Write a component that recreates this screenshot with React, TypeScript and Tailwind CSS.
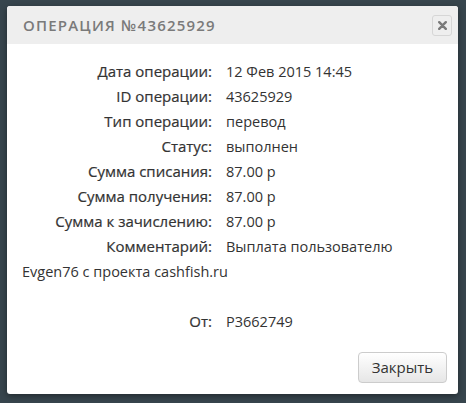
import React from "react";

const rows = [
  { label: "Дата операции:", value: "12 Фев 2015 14:45" },
  { label: "ID операции:", value: "43625929" },
  { label: "Тип операции:", value: "перевод" },
  { label: "Статус:", value: "выполнен" },
  { label: "Сумма списания:", value: "87.00 р" },
  { label: "Сумма получения:", value: "87.00 р" },
  { label: "Сумма к зачислению:", value: "87.00 р" },
];

const labelCls =
  "w-[190px] text-right text-[15px] text-[#333] [-webkit-text-stroke:0.2px_#333]";

export default function App() {
  return (
    <div className="w-[466px] h-[403px] bg-[#37454d] pt-[6px] pl-[7px] font-['Open_Sans',sans-serif]">
      <div className="w-[451px] h-[388px] bg-white rounded-[3px] shadow-[0_2px_6px_rgba(0,0,0,0.4)] flex flex-col overflow-hidden">
        {/* header */}
        <div className="h-[38px] bg-[#eeeeee] flex items-center justify-between pl-[16px] pr-[6px]">
          <span className="text-[15px] font-semibold tracking-[1.2px] text-[#7a7a7a]">
            ОПЕРАЦИЯ №43625929
          </span>
          <button className="w-[20px] h-[21px] border border-[#d6d6d6] rounded-[3px] flex items-center justify-center">
            <svg width="9" height="9" viewBox="0 0 9 9">
              <path d="M1.2 1.2 L7.8 7.8 M7.8 1.2 L1.2 7.8" stroke="#7a7a7a" strokeWidth="2.4" strokeLinecap="round" />
            </svg>
          </button>
        </div>

        {/* body */}
        <div className="pl-[15px] pr-[10px] pt-[15px] text-[14.5px] text-[#333] leading-[25px]">
          {rows.map((r, i) => (
            <div key={i} className="flex">
              <span className={labelCls}>{r.label}</span>
              <span className="ml-[14px]">{r.value}</span>
            </div>
          ))}
          <div className="flex">
            <span className={labelCls}>Комментарий:</span>
            <span className="ml-[14px]">Выплата пользователю</span>
          </div>
          <div>Evgen76 с проекта cashfish.ru</div>
          <div className="h-[25px]" />
          <div className="flex">
            <span className={labelCls}>От:</span>
            <span className="ml-[14px]">P3662749</span>
          </div>
        </div>

        <div className="flex justify-end pr-[11px] mt-[18px]">
          <button className="w-[89px] h-[31px] rounded-[4px] border border-[#cccccc] bg-gradient-to-b from-white to-[#e6e6e6] text-[15px] text-[#333]">
            Закрыть
          </button>
        </div>
      </div>
    </div>
  );
}
